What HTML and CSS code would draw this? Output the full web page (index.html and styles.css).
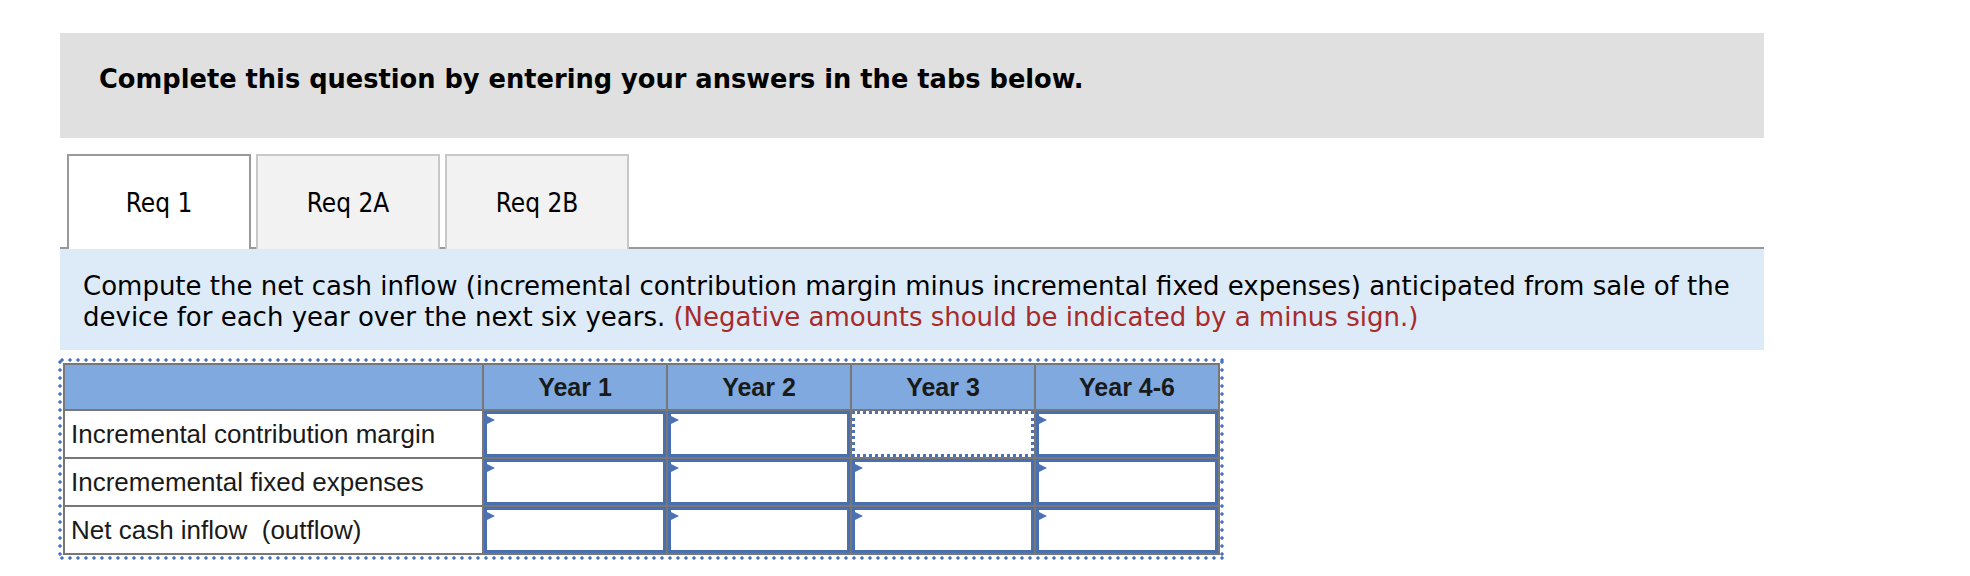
FILE: index.html
```html
<!DOCTYPE html>
<html lang="en">
<head>
<meta charset="utf-8">
<title>Req 1</title>
<link rel="stylesheet" href="styles.css">
</head>
<body>
<main class="page">
  <section class="banner">
    <h1 class="banner-title">Complete this question by entering your answers in the tabs below.</h1>
  </section>

  <nav class="tabs">
    <div class="tab tab-active">Req 1</div>
    <div class="tab">Req 2A</div>
    <div class="tab">Req 2B</div>
  </nav>

  <section class="prompt">
    <p class="prompt-text">Compute the net cash inflow (incremental contribution margin minus incremental fixed expenses) anticipated from sale of the device for each year over the next six years. <span class="note">(Negative amounts should be indicated by a minus sign.)</span></p>
  </section>

  <div class="grid-frame">
    <table class="grid">
      <thead>
        <tr>
          <th class="label-col"></th>
          <th>Year 1</th>
          <th>Year 2</th>
          <th>Year 3</th>
          <th>Year 4-6</th>
        </tr>
      </thead>
      <tbody>
        <tr>
          <td class="label">Incremental contribution margin</td>
          <td class="cell"><div class="input"><span class="flag"></span></div></td>
          <td class="cell"><div class="input"><span class="flag"></span></div></td>
          <td class="cell"><div class="input input-focus"></div></td>
          <td class="cell"><div class="input"><span class="flag"></span></div></td>
        </tr>
        <tr>
          <td class="label">Incrememental fixed expenses</td>
          <td class="cell"><div class="input"><span class="flag"></span></div></td>
          <td class="cell"><div class="input"><span class="flag"></span></div></td>
          <td class="cell"><div class="input"><span class="flag"></span></div></td>
          <td class="cell"><div class="input"><span class="flag"></span></div></td>
        </tr>
        <tr>
          <td class="label">Net cash inflow&nbsp; (outflow)</td>
          <td class="cell"><div class="input"><span class="flag"></span></div></td>
          <td class="cell"><div class="input"><span class="flag"></span></div></td>
          <td class="cell"><div class="input"><span class="flag"></span></div></td>
          <td class="cell"><div class="input"><span class="flag"></span></div></td>
        </tr>
      </tbody>
    </table>
  </div>
</main>
</body>
</html>
```

FILE: styles.css
```css
html, body {
  margin: 0;
  padding: 0;
  background: #ffffff;
}

.page {
  width: 1704px;
  margin-left: 60px;
  padding-top: 33px;
}

.banner {
  background: #e0e0e0;
  height: 105px;
  box-sizing: border-box;
  padding: 31px 0 0 39px;
}

.banner-title {
  margin: 0;
  font-family: "DejaVu Sans", Verdana, sans-serif;
  font-weight: bold;
  font-size: 25.7px;
  line-height: 30px;
  color: #000;
}

.tabs {
  display: flex;
  gap: 5px;
  margin-top: 16px;
  padding-left: 7px;
  border-bottom: 2px solid #999999;
  height: 93px;
}

.tab {
  width: 184px;
  height: 95px;
  box-sizing: border-box;
  display: flex;
  align-items: center;
  justify-content: center;
  background: #f2f2f2;
  border: 2px solid #c8c8c8;
  border-bottom: none;
  font-family: "DejaVu Sans Condensed", Tahoma, sans-serif;
  font-size: 26px;
  color: #000;
}

.tab-active {
  background: #ffffff;
  border-color: #999999;
  position: relative;
  z-index: 1;
}

.prompt {
  background: #ddeaf7;
  height: 101px;
  box-sizing: border-box;
  padding: 22px 20px 0 23px;
}

.prompt-text {
  margin: 0;
  font-family: "DejaVu Sans", Verdana, sans-serif;
  font-size: 26px;
  line-height: 31px;
  color: #000;
}

.note {
  color: #a82a2a;
}

.grid-frame {
  display: inline-block;
  margin: 8px 0 0 -2px;
  padding: 5px 4px 5px 5px;
  background-image:
    radial-gradient(circle, #4472c4 1.4px, transparent 1.9px),
    radial-gradient(circle, #4472c4 1.4px, transparent 1.9px),
    radial-gradient(circle, #4472c4 1.4px, transparent 1.9px),
    radial-gradient(circle, #4472c4 1.4px, transparent 1.9px);
  background-size: 8px 4px, 8px 4px, 4px 8px, 4px 8px;
  background-position: 0 0, 0 100%, 0 0, 100% 0;
  background-repeat: repeat-x, repeat-x, repeat-y, repeat-y;
}

.grid {
  border-collapse: collapse;
  font-family: "Liberation Sans", Arial, Helvetica, sans-serif;
  color: #1a1a1a;
}

.grid th,
.grid td {
  border: 2px solid #777777;
  padding: 0;
}

.grid th {
  background: #80aadf;
  height: 44px;
  width: 182px;
  font-weight: bold;
  font-size: 25px;
  text-align: center;
  vertical-align: middle;
}

.grid th.label-col {
  width: 417px;
}

.label {
  height: 46px;
  padding: 0 0 0 6px !important;
  font-size: 26px;
  text-align: left;
  vertical-align: middle;
  white-space: nowrap;
}

.cell {
  height: 46px;
}

.input {
  position: relative;
  height: 46px;
  box-sizing: border-box;
  border: 3px solid #4a6fae;
  background: #ffffff;
}

.input-focus {
  border: 3px dotted #4a72b4;
}

.flag {
  position: absolute;
  left: -2px;
  top: 1px;
  width: 0;
  height: 0;
  border-top: 5px solid transparent;
  border-bottom: 5px solid transparent;
  border-left: 10px solid #4a72b4;
}
```
